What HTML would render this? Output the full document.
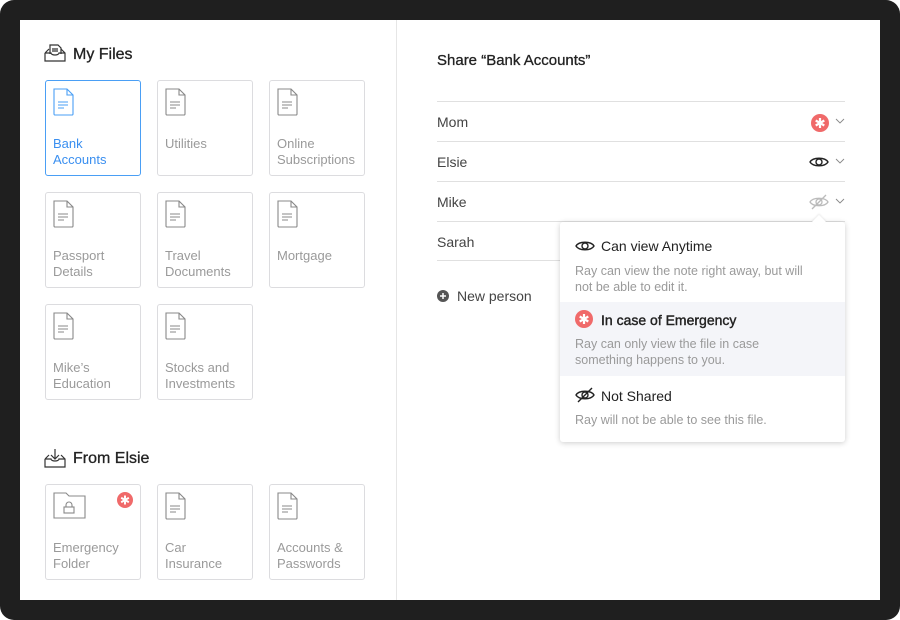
<!DOCTYPE html>
<html><head><style>
*{margin:0;padding:0;box-sizing:border-box}
body{width:900px;height:620px;background:#fff;font-family:"Liberation Sans",sans-serif;overflow:hidden}
.frame{position:absolute;left:0;top:0;width:900px;height:620px;background:#1f1f1f;border-radius:14px}
.screen{position:absolute;left:20px;top:20px;width:860px;height:580px;background:#fff}
.left{position:absolute;left:0;top:0;width:377px;height:580px;border-right:1px solid #e6e6e6}
.h{position:absolute;font-size:16px;color:#222;font-weight:500;-webkit-text-stroke:0.3px #222}
.card{position:absolute;width:96px;height:96px;border:1px solid #dcdcdf;border-radius:3px;color:#9a9a9a;font-size:13px;line-height:16px}
.card.sel{border-color:#4a9ff5;color:#3a8ff0}
.card .t{position:absolute;left:7px;top:55px}
.card svg{position:absolute;left:7px;top:7px}
.row{position:absolute;left:417px;width:408px;height:40px;border-top:1px solid #e0e0e0;font-size:14px;color:#444;line-height:40px}
.row .ic{position:absolute;right:16px;top:12px}
.row .cv{position:absolute;right:0;top:13px}
.dd{position:absolute;left:540px;top:202px;width:285px;height:220px;background:#fff;border-radius:3px;box-shadow:0 1px 6px rgba(0,0,0,.2)}
.it{position:absolute;left:0;width:285px}
.it .tt{position:absolute;left:41px;font-size:14px;color:#222}
.it .d{position:absolute;left:15px;font-size:12.5px;color:#9a9a9a;line-height:16px}
</style></head><body>
<div class="frame"></div>
<div class="screen">
<div class="left">
<svg style="position:absolute;left:24px;top:23px" width="22" height="20" viewBox="0 0 22 20" fill="none" stroke="#333" stroke-width="1.2"><path d="M1 10v8h20v-8l-4-4M1 10l4-4M1 10h6a4 2 0 0 0 8 0h6"/><path d="M6 11V2h8l3 3v6"/><path d="M8 6h6M8 8h6"/></svg>
<div class="h" style="left:53px;top:26px">My Files</div>
<svg style="position:absolute;left:24px;top:427px" width="22" height="22" viewBox="0 0 22 22" fill="none" stroke="#333" stroke-width="1.2"><path d="M1 12v8h20v-8l-4-4M1 12l4-4M1 12h6a4 2 0 0 0 8 0h6"/><path d="M11 2v10M7 8l4 4 4-4"/></svg>
<div class="h" style="left:53px;top:430px">From Elsie</div>
</div>
<div id="cards"></div>
<div style="position:absolute;left:417px;top:32px;font-size:15px;color:#222;-webkit-text-stroke:0.3px #222">Share “Bank Accounts”</div>
<div class="row" style="top:81px">Mom<svg class="ic" width="18" height="18" viewBox="0 0 18 18"><circle cx="9" cy="9" r="9" fill="#f06a6a"/><path d="M9 4v10M4.7 6.5l8.6 5M4.7 11.5l8.6-5" stroke="#fff" stroke-width="2.2"/></svg><svg class="cv" width="10" height="12" viewBox="0 0 10 12"><path d="M1 4l4 4 4-4" fill="none" stroke="#888" stroke-width="0.9"/></svg></div>
<div class="row" style="top:121px">Elsie<svg class="ic" width="20" height="16" viewBox="0 0 20 16" fill="none" stroke="#222" stroke-width="1.4"><path d="M1 8c3-5 15-5 18 0c-3 5-15 5-18 0z"/><circle cx="10" cy="8" r="3"/></svg><svg class="cv" width="10" height="12" viewBox="0 0 10 12"><path d="M1 4l4 4 4-4" fill="none" stroke="#888" stroke-width="0.9"/></svg></div>
<div class="row" style="top:161px">Mike<svg class="ic" width="20" height="16" viewBox="0 0 20 16" fill="none" stroke="#bbb" stroke-width="1.3"><path d="M1 8c3-5 15-5 18 0c-3 5-15 5-18 0z"/><circle cx="10" cy="8" r="3"/><path d="M3 15L17 1"/></svg><svg class="cv" width="10" height="12" viewBox="0 0 10 12"><path d="M1 4l4 4 4-4" fill="none" stroke="#888" stroke-width="0.9"/></svg></div>
<div class="row" style="top:201px;border-bottom:1px solid #e0e0e0">Sarah</div>
<svg style="position:absolute;left:417px;top:270px" width="12" height="12"><circle cx="6" cy="6" r="6" fill="#555"/><path d="M6 3v6M3 6h6" stroke="#fff" stroke-width="1.5"/></svg>
<div style="position:absolute;left:437px;top:268px;font-size:14px;color:#444">New person</div>
<div class="dd">
<div style="position:absolute;left:254px;top:-5px;width:10px;height:10px;background:#fff;transform:rotate(45deg);box-shadow:-1px -1px 2px rgba(0,0,0,.08)"></div>
<div class="it" style="top:0;height:80px">
<svg style="position:absolute;left:15px;top:17px" width="20" height="14" viewBox="0 0 20 14" fill="none" stroke="#222" stroke-width="1.4"><path d="M1 7c3-5 15-5 18 0c-3 5-15 5-18 0z"/><circle cx="10" cy="7" r="3"/></svg>
<div class="tt" style="top:16px">Can view Anytime</div>
<div class="d" style="top:41px">Ray can view the note right away, but will<br>not be able to edit it.</div></div>
<div class="it" style="top:80px;height:74px;background:#f4f5f9">
<svg style="position:absolute;left:15px;top:8px" width="18" height="18" viewBox="0 0 18 18"><circle cx="9" cy="9" r="9" fill="#f06a6a"/><path d="M9 4v10M4.7 6.5l8.6 5M4.7 11.5l8.6-5" stroke="#fff" stroke-width="2.2"/></svg>
<div class="tt" style="top:10px;-webkit-text-stroke:0.4px #222">In case of Emergency</div>
<div class="d" style="top:34px">Ray can only view the file in case<br>something happens to you.</div></div>
<div class="it" style="top:154px;height:66px">
<svg style="position:absolute;left:15px;top:11px" width="20" height="16" viewBox="0 0 20 16" fill="none" stroke="#222" stroke-width="1.4"><path d="M1 8c3-5 15-5 18 0c-3 5-15 5-18 0z"/><circle cx="10" cy="8" r="3"/><path d="M3 15L17 1"/></svg>
<div class="tt" style="top:12px">Not Shared</div>
<div class="d" style="top:36px">Ray will not be able to see this file.</div></div>
</div>
</div>
<script>
const doc=c=>`<svg width="21" height="28" viewBox="0 0 21 28" fill="none" stroke="${c}" stroke-width="1.1"><path d="M1 1h13l6 6v19a1 1 0 0 1-1 1H2a1 1 0 0 1-1-1z"/><path d="M14 1v6h6M5 14h10M5 17h10M5 20h6"/></svg>`;
const fold=`<svg width="33" height="28" viewBox="0 0 33 28" fill="none" stroke="#888" stroke-width="1.1"><path d="M1 1h12l3 3h16v22H1z"/><rect x="11" y="15" width="10" height="6"/><path d="M13 15v-2a3 3 0 0 1 6 0v2"/></svg>`;
const cards=[[25,60,"Bank<br>Accounts",1],[137,60,"Utilities"],[249,60,"Online<br>Subscriptions"],[25,172,"Passport<br>Details"],[137,172,"Travel<br>Documents"],[249,172,"Mortgage"],[25,284,"Mike’s<br>Education"],[137,284,"Stocks and<br>Investments"],[25,464,"Emergency<br>Folder",0,1],[137,464,"Car<br>Insurance"],[249,464,"Accounts &amp;<br>Passwords"]];
let h="";
for(const [x,y,t,s,f] of cards){h+=`<div class="card${s?' sel':''}" style="left:${x}px;top:${y}px">${f?fold:doc(s?'#4a9ff5':'#888')}<div class="t">${t}</div>${f?`<svg style="position:absolute;left:71px;top:7px" width="16" height="16" viewBox="0 0 18 18"><circle cx="9" cy="9" r="9" fill="#f06a6a"/><path d="M9 4v10M4.7 6.5l8.6 5M4.7 11.5l8.6-5" stroke="#fff" stroke-width="2.2"/></svg>`:''}</div>`}
document.getElementById("cards").outerHTML=h;
</script>
</body></html>
